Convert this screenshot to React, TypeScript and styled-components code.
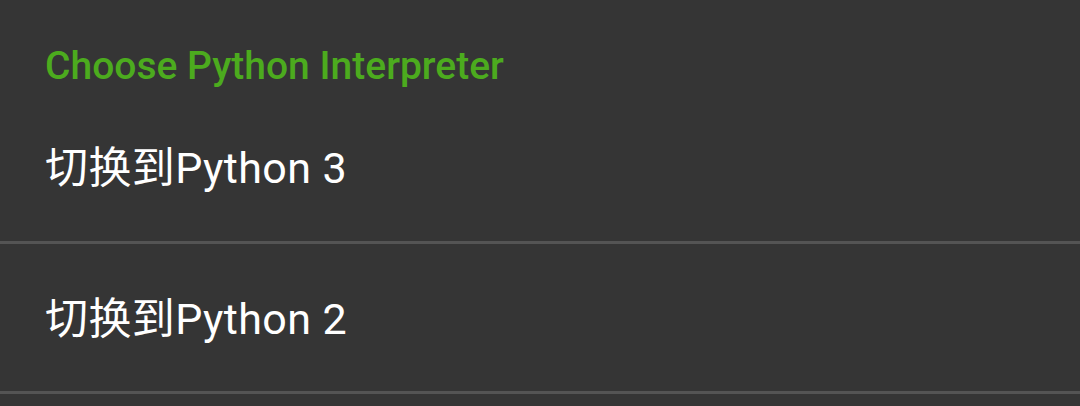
import React from "react";
import styled, { createGlobalStyle } from "styled-components";

const GlobalStyle = createGlobalStyle`
  html, body {
    margin: 0;
    padding: 0;
    background: #353535;
  }
`;

const Dialog = styled.div`
  width: 1080px;
  height: 406px;
  overflow: hidden;
  background: #353535;
  font-family: Roboto, "Noto Sans CJK SC", sans-serif;
`;

const Title = styled.h2`
  margin: 0;
  padding: 46px 45px 0;
  height: 41px;
  font-size: 39px;
  font-weight: 500;
  line-height: 41px;
  color: #4cab1e;
`;

const Item = styled.div<{ $height: number; $shift?: number }>`
  display: flex;
  align-items: center;
  box-sizing: border-box;
  height: ${(p) => p.$height}px;
  padding: 0 45px ${(p) => p.$shift ?? 0}px;
  border-bottom: 3px solid #545454;
  font-size: 43px;
  letter-spacing: 0.4px;
  color: #ffffff;
`;

export default function App() {
  return (
    <>
      <GlobalStyle />
      <Dialog>
        <Title>Choose Python Interpreter</Title>
        <Item $height={157}>切换到Python 3</Item>
        <Item $height={150} $shift={5}>切换到Python 2</Item>
      </Dialog>
    </>
  );
}
